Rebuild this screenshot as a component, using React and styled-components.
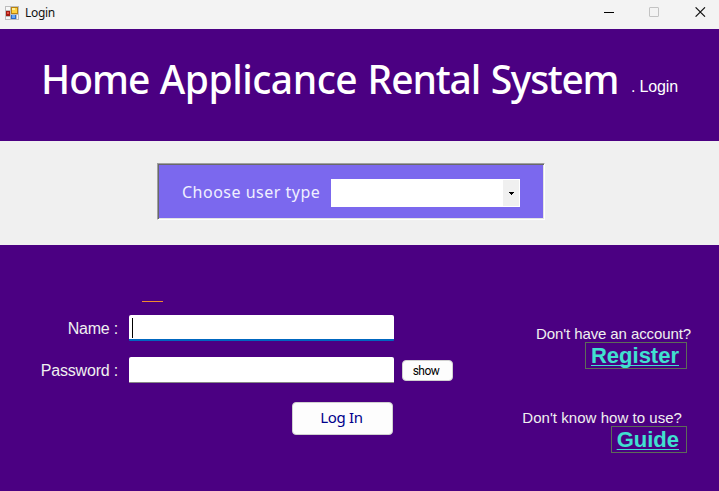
import React from "react";
import styled, { createGlobalStyle } from "styled-components";

const GlobalStyle = createGlobalStyle`
  *, *::before, *::after { box-sizing: border-box; }
  body { margin: 0; overflow: hidden; }
  button, input { font: inherit; margin: 0; }
`;

const Window = styled.div`
  width: 719px;
  height: 491px;
  display: flex;
  flex-direction: column;
  background: #4b0082;
  font-family: "Liberation Sans", Arial, sans-serif;
  white-space: nowrap;
  overflow: hidden;
`;

const TitleBar = styled.div`
  height: 29px;
  flex: none;
  display: flex;
  align-items: center;
  justify-content: space-between;
  background: #f3f3f3;
  padding: 0 13px 5px 5px;
`;

const Caption = styled.div`
  display: flex;
  align-items: center;
  gap: 6px;
  padding-top: 1px;
  font: 12px/16px "Noto Sans", sans-serif;
  letter-spacing: -0.3px;
  color: #111;
  svg { display: block; }
`;

const CaptionButtons = styled.div`
  display: flex;
  align-items: center;
  gap: 35px;
  svg { display: block; }
  svg:last-child { margin-left: 1px; }
`;

const Header = styled.header`
  height: 112px;
  flex: none;
  display: flex;
  align-items: flex-start;
  padding: 24px 0 0 41px;
  color: #fff;
`;

const Heading = styled.h1`
  margin: 0;
  width: 590px;
  font: 500 39px/51px "Noto Sans", sans-serif;
  letter-spacing: -0.92px;
  word-spacing: 1.2px;
`;

const HeadingWord = styled.span`
  letter-spacing: ${(p) => p.$tracking}px;
`;

const Crumb = styled.span`
  margin-top: 25px;
  font-size: 16px;
  line-height: 18px;
  letter-spacing: -0.15px;
`;

const Band = styled.section`
  height: 104px;
  flex: none;
  padding: 22px 0 0 157px;
  background: #f0f0f0;
`;

const UserTypePanel = styled.div`
  width: 388px;
  height: 57px;
  display: flex;
  align-items: flex-start;
  padding: 14px 0 0 24px;
  background: #7b68ee;
  border: 1px solid;
  border-color: #a0a0a0 #fff #fff #a0a0a0;
  box-shadow: inset 1px 1px 0 #696969, inset -1px -1px 0 #e3e3e3;
`;

const UserTypeLabel = styled.label`
  width: 149px;
  font: 16px/28px "Noto Sans", sans-serif;
  letter-spacing: 0.5px;
  color: #f0f0ff;
`;

const ComboBox = styled.div`
  width: 189px;
  height: 28px;
  margin-top: 1px;
  display: flex;
  justify-content: flex-end;
  padding: 1px;
  background: #fff;
`;

const ComboArrow = styled.div`
  width: 16px;
  display: flex;
  padding: 12px 0 0 6px;
  background: #f0f0f0;
  svg { display: block; }
`;

const Body = styled.main`
  flex: 1;
  display: flex;
  justify-content: space-between;
`;

const LoginForm = styled.form`
  width: 453px;
  display: flex;
  flex-direction: column;
`;

const Marker = styled.div`
  width: 21px;
  height: 1px;
  margin: 56px 0 13px 142px;
  background: #f28a2e;
`;

const Field = styled.div`
  display: flex;
  height: 26px;
  margin-bottom: 16px;
`;

const FieldLabel = styled.label`
  width: 118px;
  margin-right: 11px;
  text-align: right;
  font-size: 16px;
  line-height: 27px;
  letter-spacing: -0.2px;
  color: #f0f0f0;
`;

const TextBox = styled.div`
  width: 265px;
  height: 26px;
  padding: 3px 0 0 3px;
  background: #fff;
  border-bottom: ${(p) => (p.$focused ? "2px solid #0067c0" : "1px solid #868686")};
  border-radius: 2px 2px 1px 1px;
`;

const Caret = styled.div`
  width: 1px;
  height: 20px;
  background: #000;
`;

const PushButton = styled.button`
  padding: 0;
  border: 1px solid #d0d0d0;
  border-radius: 4px;
  background: #fdfdfd;
`;

const ShowButton = styled(PushButton)`
  width: 51px;
  height: 21px;
  margin: 3px 0 0 8px;
  padding: 1px 3px 0 0;
  font: 12px/18px Roboto, sans-serif;
  letter-spacing: -0.5px;
  color: #000;
`;

const LoginButton = styled(PushButton)`
  width: 101px;
  height: 33px;
  margin: 3px 0 0 292px;
  padding: 0 2px 3px 0;
  font: 15px/28px "Noto Sans", sans-serif;
  letter-spacing: -0.3px;
  color: #00008b;
`;

const Aside = styled.aside`
  display: flex;
  flex-direction: column;
  align-items: flex-end;
  padding: 80px 32px 0 0;
`;

const Prompt = styled.span`
  height: 17px;
  margin-right: ${(p) => p.$shift}px;
  font-size: 15px;
  line-height: 18px;
  letter-spacing: ${(p) => p.$tracking}px;
  color: #f0f0f0;
`;

const LinkBox = styled.a`
  width: ${(p) => p.$width}px;
  height: 27px;
  margin-bottom: 40px;
  padding-right: 7px;
  text-align: right;
  border: 1px solid #5d6b58;
  font-size: 22px;
  line-height: 26px;
  font-weight: 700;
  color: #40e0d0;
  text-decoration: underline;
  text-decoration-thickness: 1px;
  text-underline-offset: 2px;
  text-decoration-skip-ink: none;
`;

const FormIcon = () => (
  <svg width="14" height="14" viewBox="0 0 14 14" shapeRendering="crispEdges">
    <path fill="#bdbdbd" d="M0 0h14v14H0z" />
    <path fill="#f7f7f7" d="M1 1h4v3H1zM1 11h4v2H1zM12 9h1v4h-1z" />
    <path fill="#b98210" d="M6 1h7v7H6z" />
    <path fill="#ffd23e" d="M7 2h5v5H7z" />
    <path fill="#fff09b" d="M7 2h3v2H7z" />
    <path fill="#a31a10" d="M1 5h4v5H1z" />
    <path fill="#e65042" d="M2 6h2v2H2z" />
    <path fill="#2b69c7" d="M6 9h5v4H6z" />
    <path fill="#68a7f5" d="M7 9h3v3H7z" />
  </svg>
);

export default function App() {
  return (
    <>
      <GlobalStyle />
      <Window>
        <TitleBar>
          <Caption>
            <FormIcon />
            Login
          </Caption>
          <CaptionButtons>
            <svg width="10" height="10" viewBox="0 0 10 10">
              <path fill="#000" d="M0 5h10v1H0z" />
            </svg>
            <svg width="10" height="10" viewBox="0 0 10 10">
              <rect x=".5" y=".5" width="9" height="9" rx=".5" fill="none" stroke="#c3c3c3" />
            </svg>
            <svg width="11" height="10" viewBox="0 0 11 10">
              <path d="M.6.3l9.4 9.4M10 .3L.6 9.7" stroke="#111" strokeWidth="1.1" />
            </svg>
          </CaptionButtons>
        </TitleBar>
        <Header>
          <Heading>
            <HeadingWord $tracking={-1}>Home</HeadingWord>{" "}
            <HeadingWord $tracking={-0.5}>Applicance</HeadingWord>{" "}
            <HeadingWord $tracking={-1.1}>Rental</HeadingWord>{" "}
            <HeadingWord $tracking={-1.3}>System</HeadingWord>
          </Heading>
          <Crumb>. Login</Crumb>
        </Header>
        <Band>
          <UserTypePanel>
            <UserTypeLabel>Choose user type</UserTypeLabel>
            <ComboBox>
              <ComboArrow>
                <svg width="5" height="3" viewBox="0 0 5 3" shapeRendering="crispEdges">
                  <path d="M0 0h5v1H4v1H3v1H2V2H1V1H0z" />
                </svg>
              </ComboArrow>
            </ComboBox>
          </UserTypePanel>
        </Band>
        <Body>
          <LoginForm>
            <Marker />
            <Field>
              <FieldLabel>Name :</FieldLabel>
              <TextBox $focused>
                <Caret />
              </TextBox>
            </Field>
            <Field>
              <FieldLabel>Password :</FieldLabel>
              <TextBox />
              <ShowButton type="button">show</ShowButton>
            </Field>
            <LoginButton type="button">Log In</LoginButton>
          </LoginForm>
          <Aside>
            <Prompt $shift={-4} $tracking={-0.1}>Don't have an account?</Prompt>
            <LinkBox $width={102}>Register</LinkBox>
            <Prompt $shift={5} $tracking={0.04}>Don't know how to use?</Prompt>
            <LinkBox $width={76}>Guide</LinkBox>
          </Aside>
        </Body>
      </Window>
    </>
  );
}
